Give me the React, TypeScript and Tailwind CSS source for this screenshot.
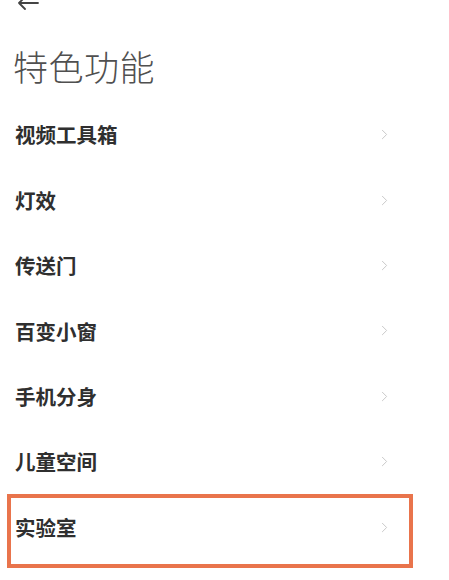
import { ChevronRight } from "lucide-react";

const ITEMS = ["视频工具箱", "灯效", "传送门", "百变小窗", "手机分身", "儿童空间", "实验室"];

export default function App() {
  return (
    <div
      className="relative w-[449px] h-[580px] overflow-hidden bg-white"
      style={{ fontFamily: '"Noto Sans CJK SC", "Noto Sans", sans-serif' }}
    >
      {/* back arrow, cut off at top */}
      <div className="h-[12px] pl-[17px] -mt-[5px]">
        <svg width="22" height="16" viewBox="0 0 22 16" fill="none" stroke="#444" strokeWidth="1.8" strokeLinecap="round" strokeLinejoin="round">
          <path d="M21 8H2M8 2L2 8l6 6" />
        </svg>
      </div>

      <h1 className="mt-[37px] pl-[13px] text-[35px] leading-[44px] font-light text-[#505050] tracking-[0.5px]">特色功能</h1>

      <ul className="mt-[14px]">
        {ITEMS.map((item) => (
          <li key={item} className="h-[65.4px] flex items-center justify-between pl-[15px] pr-[56px]">
            <span className="text-[20.5px] font-bold text-[#2f2f2f] leading-none">{item}</span>
            <ChevronRight className="h-[17px] w-[17px] text-[#c8c8c8]" strokeWidth={1.4} />
          </li>
        ))}
      </ul>

      {/* highlight box */}
      <div className="absolute left-[7px] top-[494px] w-[406px] h-[74px] border-[4px] border-[#e9744c]" />
    </div>
  );
}
